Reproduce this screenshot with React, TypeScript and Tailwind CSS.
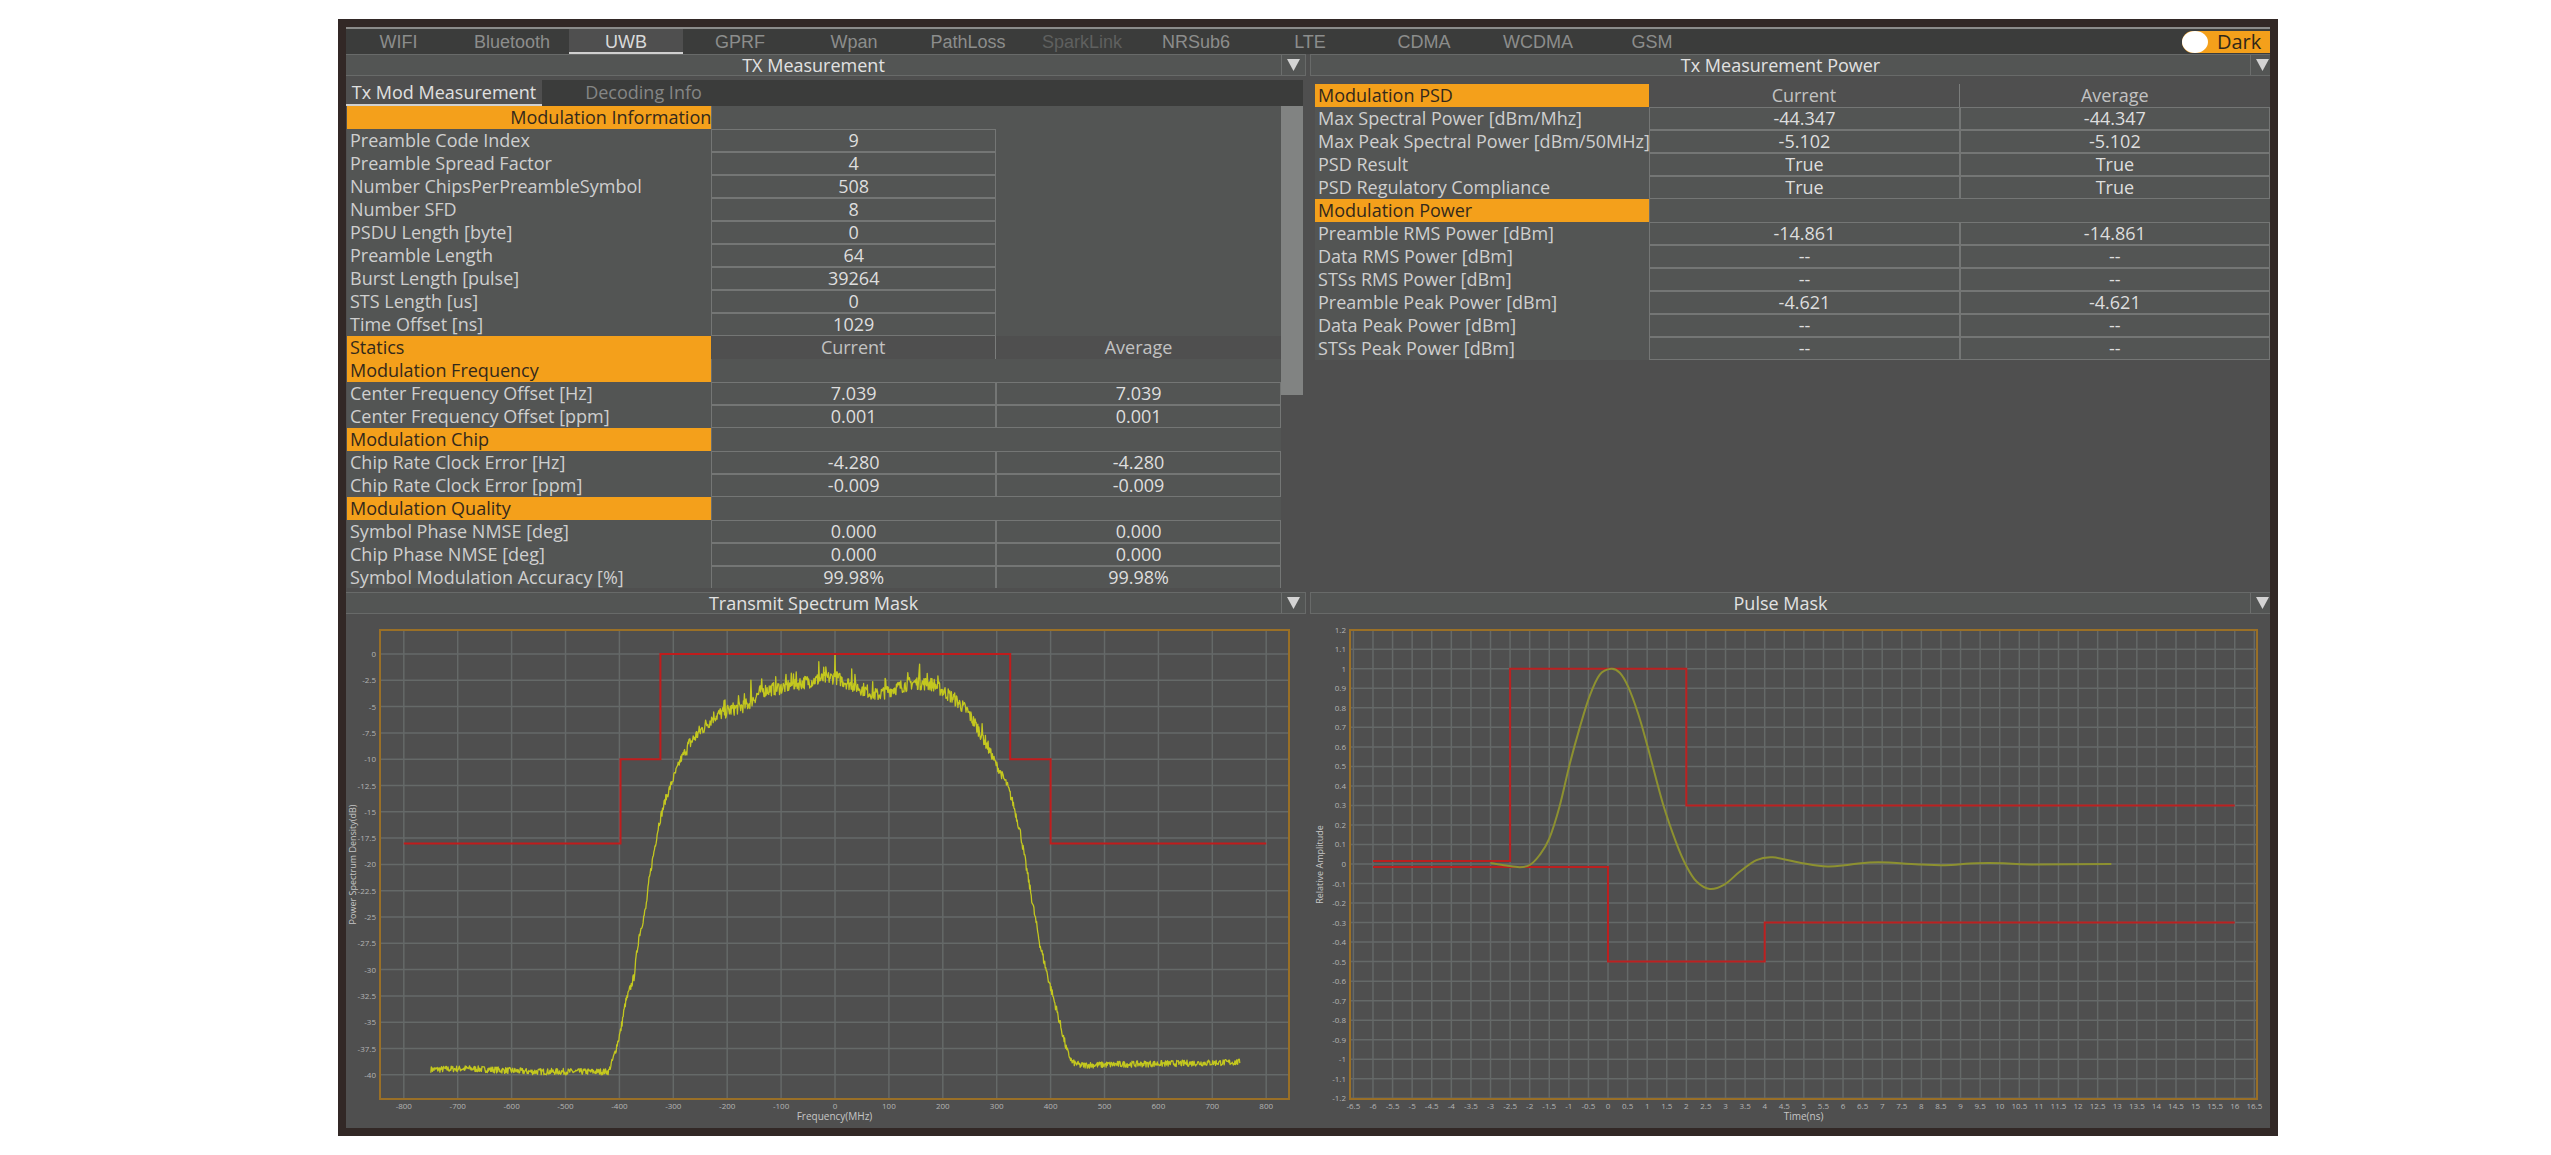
import { useState, type ReactNode } from 'react';
import clsx from 'clsx';

type Point = [number, number];
type Row = { kind: 'group' | 'info' | 'pair' | 'head'; label: string; values?: string[]; end?: boolean };

const TABS = ['WIFI', 'Bluetooth', 'UWB', 'GPRF', 'Wpan', 'PathLoss', 'SparkLink', 'NRSub6', 'LTE', 'CDMA', 'WCDMA', 'GSM'];
const SUB_TABS = ['Tx Mod Measurement', 'Decoding Info'];

const MODULATION_ROWS: Row[] = [
    { kind: 'group', label: 'Modulation Information', end: true },
    { kind: 'info', label: 'Preamble Code Index', values: ['9'] },
    { kind: 'info', label: 'Preamble Spread Factor', values: ['4'] },
    { kind: 'info', label: 'Number ChipsPerPreambleSymbol', values: ['508'] },
    { kind: 'info', label: 'Number SFD', values: ['8'] },
    { kind: 'info', label: 'PSDU Length [byte]', values: ['0'] },
    { kind: 'info', label: 'Preamble Length', values: ['64'] },
    { kind: 'info', label: 'Burst Length [pulse]', values: ['39264'] },
    { kind: 'info', label: 'STS Length [us]', values: ['0'] },
    { kind: 'info', label: 'Time Offset [ns]', values: ['1029'] },
    { kind: 'head', label: 'Statics', values: ['Current', 'Average'] },
    { kind: 'group', label: 'Modulation Frequency' },
    { kind: 'pair', label: 'Center Frequency Offset [Hz]', values: ['7.039', '7.039'] },
    { kind: 'pair', label: 'Center Frequency Offset [ppm]', values: ['0.001', '0.001'] },
    { kind: 'group', label: 'Modulation Chip' },
    { kind: 'pair', label: 'Chip Rate Clock Error [Hz]', values: ['-4.280', '-4.280'] },
    { kind: 'pair', label: 'Chip Rate Clock Error [ppm]', values: ['-0.009', '-0.009'] },
    { kind: 'group', label: 'Modulation Quality' },
    { kind: 'pair', label: 'Symbol Phase NMSE [deg]', values: ['0.000', '0.000'] },
    { kind: 'pair', label: 'Chip Phase NMSE [deg]', values: ['0.000', '0.000'] },
    { kind: 'pair', label: 'Symbol Modulation Accuracy [%]', values: ['99.98%', '99.98%'] },
];

const POWER_ROWS: Row[] = [
    { kind: 'head', label: 'Modulation PSD', values: ['Current', 'Average'] },
    { kind: 'pair', label: 'Max Spectral Power [dBm/Mhz]', values: ['-44.347', '-44.347'] },
    { kind: 'pair', label: 'Max Peak Spectral Power [dBm/50MHz]', values: ['-5.102', '-5.102'] },
    { kind: 'pair', label: 'PSD Result', values: ['True', 'True'] },
    { kind: 'pair', label: 'PSD Regulatory Compliance', values: ['True', 'True'] },
    { kind: 'group', label: 'Modulation Power' },
    { kind: 'pair', label: 'Preamble RMS Power [dBm]', values: ['-14.861', '-14.861'] },
    { kind: 'pair', label: 'Data RMS Power [dBm]', values: ['--', '--'] },
    { kind: 'pair', label: 'STSs RMS Power [dBm]', values: ['--', '--'] },
    { kind: 'pair', label: 'Preamble Peak Power [dBm]', values: ['-4.621', '-4.621'] },
    { kind: 'pair', label: 'Data Peak Power [dBm]', values: ['--', '--'] },
    { kind: 'pair', label: 'STSs Peak Power [dBm]', values: ['--', '--'] },
];

// [MHz, dB]
const SPECTRUM_MASK: Point[] = [
    [-800, -18], [-398, -18], [-398, -10], [-324, -10], [-324, 0], [325, 0], [325, -10], [400, -10], [400, -18], [800, -18],
];
const SPECTRUM: Point[] = [
    [-750, -39.5], [-680, -39.4], [-565, -39.7], [-420, -39.7], [-410, -38.2], [-398, -35.9], [-389, -33.2], [-373, -30.7],
    [-364, -26.9], [-351, -24.2], [-345, -21.6], [-339, -19.7], [-327, -16.2], [-315, -13.9], [-299, -11.7], [-286, -10],
    [-271, -8.6], [-255, -7.6], [-224, -5.9], [-199, -5.4], [-162, -4.8], [-137, -3.5], [-100, -3.2], [-69, -2.8],
    [-38, -2.5], [-14, -2.3], [0, -2.2], [35, -3], [78, -3.9], [109, -3.3], [146, -2.7], [183, -2.9], [220, -4.2],
    [245, -5.4], [276, -8], [300, -10.6], [319, -12.4], [331, -14.3], [344, -17], [356, -20.6], [368, -24.1],
    [381, -27.8], [399, -31.5], [412, -34], [430, -37.7], [440, -38.8], [455, -39.1], [529, -39], [653, -38.9], [751, -38.8],
];
const SPIKES: Record<string, number> = { '0': 2.2, '31': 1.5, '157': 1.8, '171': 1, '-30': 1.7, '-77': 1, '-156': 2, '93': 1.3 };

// [ns, relative amplitude]
const PULSE_UPPER: Point[] = [[-6, 0.015], [-2.5, 0.015], [-2.5, 1], [2, 1], [2, 0.3], [16, 0.3]];
const PULSE_LOWER: Point[] = [[-6, -0.015], [0, -0.015], [0, -0.5], [4, -0.5], [4, -0.3], [16, -0.3]];
const PULSE: Point[] = [
    [-3, 0.005], [-2.6, -0.008], [-2.25, -0.016], [-2, -0.005], [-1.75, 0.045], [-1.5, 0.13], [-1.23, 0.3], [-0.98, 0.51],
    [-0.72, 0.7], [-0.47, 0.86], [-0.21, 0.97], [0.08, 1], [0.3, 0.98], [0.51, 0.91], [0.77, 0.77], [1, 0.61], [1.4, 0.31],
    [1.74, 0.11], [2, -0.01], [2.26, -0.09], [2.6, -0.128], [2.98, -0.104], [3.36, -0.04], [3.79, 0.02], [4.2, 0.034],
    [4.9, 0.007], [5.6, -0.013], [6.2, -0.002], [6.9, 0.009], [8, -0.003], [8.6, -0.006], [9.4, 0.004], [10.1, 0.004],
    [10.8, -0.002], [12.85, 0],
];

const range = (from: number, to: number, step: number) =>
    Array.from({ length: Math.round((to - from) / step) + 1 }, (_, i) => Math.round((from + i * step) * 10) / 10);

// fills the gaps between the measured points and adds a repeatable noise
function noisySpectrum(): Point[] {
    const out: Point[] = [];
    let seed = 7;
    let segment = 0;
    for (let f = -750; f <= 751; f++) {
        while (f > SPECTRUM[segment + 1][0]) segment++;
        const [x0, y0] = SPECTRUM[segment];
        const [x1, y1] = SPECTRUM[segment + 1];
        const base = y0 + ((y1 - y0) * (f - x0)) / (x1 - x0);
        seed = (seed * 16807) % 2147483647;
        const r = seed / 2147483647;
        let amp = 0.3;
        if (base > -38) amp = 0.4;
        if (base > -9) amp = 0.65;
        let noise = (r - 0.5) * 2 * amp;
        if (base > -9 && r > 0.96) noise += 0.5;
        out.push([f, base + (SPIKES[String(f)] ?? noise)]);
    }
    return out;
}

const NOISY = noisySpectrum();

function smoothPath(points: Point[]) {
    let d = `M${points[0][0]} ${points[0][1]}`;
    for (let i = 0; i < points.length - 1; i++) {
        const p0 = points[Math.max(i - 1, 0)];
        const p1 = points[i];
        const p2 = points[i + 1];
        const p3 = points[Math.min(i + 2, points.length - 1)];
        d += `C${p1[0] + (p2[0] - p0[0]) / 6} ${p1[1] + (p2[1] - p0[1]) / 6} ${p2[0] - (p3[0] - p1[0]) / 6} ${p2[1] - (p3[1] - p1[1]) / 6} ${p2[0]} ${p2[1]}`;
    }
    return d;
}

const linePath = (points: Point[]) => 'M' + points.map((p) => `${p[0].toFixed(1)} ${p[1].toFixed(1)}`).join('L');

type ChartProps = {
    title: string;
    box: { left: number; right: number; top: number; bottom: number };
    xTicks: number[];
    yTicks: number[];
    x: (v: number) => number;
    y: (v: number) => number;
    xLabel: string;
    yLabel: string;
    yLabelX: number;
    children: ReactNode;
};

function Chart({ title, box, xTicks, yTicks, x, y, xLabel, yLabel, yLabelX, children }: ChartProps) {
    const midX = (box.left + box.right) / 2;
    const midY = (box.top + box.bottom) / 2;
    return (
        <svg viewBox="0 0 962 514" role="img" aria-label={title} className="block h-auto w-full bg-[#4f4f4f]">
            <g stroke="#656968" strokeWidth="1.5">
                {xTicks.map((t) => <line key={t} x1={x(t)} x2={x(t)} y1={box.top} y2={box.bottom} />)}
                {yTicks.map((t) => <line key={t} x1={box.left} x2={box.right} y1={y(t)} y2={y(t)} />)}
            </g>
            <rect x={box.left} y={box.top} width={box.right - box.left} height={box.bottom - box.top} fill="none" stroke="#9a7027" strokeWidth="2" />
            <g fill="#b4b4b4" fontSize="8">
                {xTicks.map((t) => <text key={t} x={x(t)} y={box.bottom + 10} textAnchor="middle">{t}</text>)}
                {yTicks.map((t) => <text key={t} x={box.left - 4} y={y(t) + 3} textAnchor="end">{t}</text>)}
            </g>
            <g fill="#c6c6c6">
                <text x={midX} y={box.bottom + 21} textAnchor="middle" fontSize="10">{xLabel}</text>
                <text transform={`translate(${yLabelX} ${midY}) rotate(-90)`} textAnchor="middle" fontSize="9">{yLabel}</text>
            </g>
            {children}
        </svg>
    );
}

function SpectrumChart() {
    const x = (f: number) => 489 + f * 0.539;
    const y = (db: number) => 40 - db * 10.52;
    const place = (points: Point[]) => linePath(points.map(([a, b]): Point => [x(a), y(b)]));
    return (
        <Chart title="Transmit Spectrum Mask" box={{ left: 34, right: 943, top: 16, bottom: 485 }} xTicks={range(-800, 800, 100)}
            yTicks={range(-40, 0, 2.5)} x={x} y={y} xLabel="Frequency(MHz)" yLabel="Power Spectrum Density(dB)" yLabelX={10}>
            <path d={place(NOISY)} fill="none" stroke="#c3c71f" strokeWidth="1.3" strokeLinejoin="round" />
            <path d={place(SPECTRUM_MASK)} fill="none" stroke="#c01c1c" strokeWidth="2" />
        </Chart>
    );
}

function PulseChart() {
    const x = (t: number) => 300 + t * 39.17;
    const y = (a: number) => 250 - a * 195.2;
    const place = (points: Point[]) => points.map(([a, b]): Point => [x(a), y(b)]);
    return (
        <Chart title="Pulse Mask" box={{ left: 42, right: 949, top: 16, bottom: 485 }} xTicks={range(-6.5, 16.5, 0.5)}
            yTicks={range(-1.2, 1.2, 0.1)} x={x} y={y} xLabel="Time(ns)" yLabel="Relative Amplitude" yLabelX={15}>
            <path d={linePath(place(PULSE_UPPER))} fill="none" stroke="#bb2020" strokeWidth="2" />
            <path d={linePath(place(PULSE_LOWER))} fill="none" stroke="#bb2020" strokeWidth="2" />
            <path d={smoothPath(place(PULSE))} fill="none" stroke="#8d9130" strokeWidth="2" />
        </Chart>
    );
}

function PanelHeader({ title, right }: { title: string; right?: boolean }) {
    return (
        <div className={clsx('flex border-y border-[#686a69] bg-[#535554] text-[#e2e2e2]', right ? 'ml-[2px] border-l' : 'mr-[2px] border-r')}>
            <h2 className="flex-1 text-center text-lg leading-5 font-medium">{title}</h2>
            <button type="button" aria-label={`${title} menu`}
                className={clsx('flex items-center justify-center border-l border-[#6c6e6d]', right ? 'w-5 pl-1' : 'w-6')}>
                <svg viewBox="0 0 13 12" className="h-3 w-[13px]" fill="#d4d4d4"><path d="M0 0h13L6.5 12z" /></svg>
            </button>
        </div>
    );
}

function MeasureTable({ rows, label, narrow }: { rows: Row[]; label: string; narrow?: boolean }) {
    return (
        <table aria-label={label} className="w-full table-fixed border-separate border-spacing-0 bg-[#535554] text-lg leading-[18px]">
            <colgroup>
                <col className={narrow ? 'w-[35%]' : 'w-[39%]'} />
                <col />
                <col />
            </colgroup>
            <tbody>
                {rows.map((row) => {
                    const orange = row.kind === 'group' || row.kind === 'head';
                    return (
                        <tr key={row.label} className="h-[23px]">
                            <th scope="row" className={clsx('h-[23px] p-0 pb-[2px] pl-[3px] font-normal whitespace-nowrap',
                                row.end ? 'text-right' : 'text-left', orange ? 'bg-[#f4a01b] text-[#33291b]' : 'text-[#cfcfcf]')}>
                                {row.label}
                            </th>
                            {row.kind === 'group' && <td colSpan={2} className="h-[23px] border-l border-[#6c6e6d] p-0" />}
                            {row.kind === 'head' && row.values!.map((v, i) => (
                                <td key={i} className={clsx('h-[23px] bg-[#4f4f4f] p-0 pb-[2px] text-center text-[#c2c2c2]', i === 0 && 'border-r border-[#7a7c7b]')}>{v}</td>
                            ))}
                            {(row.kind === 'info' || row.kind === 'pair') && row.values!.map((v, i) => (
                                <td key={i} className="h-[23px] border border-[#747675] p-0 pb-[2px] text-center text-[#dedede]">{v}</td>
                            ))}
                            {row.kind === 'info' && <td className="h-[23px] p-0" />}
                        </tr>
                    );
                })}
            </tbody>
        </table>
    );
}

export default function App() {
    const [tab, setTab] = useState('UWB');
    const [subTab, setSubTab] = useState(SUB_TABS[0]);
    const [dark, setDark] = useState(true);

    return (
        <main className="min-h-screen bg-white pt-[19px] pr-[10.7%] pl-[13.25%] font-['Open_Sans','Noto_Sans',sans-serif]">
            <div className="overflow-hidden border-8 border-[#322826] bg-[#4f4f4f]">
                <nav className="flex items-center border-t-2 border-[#8b8b8a] bg-[#3b3c3b] font-['Liberation_Sans',Arial,sans-serif]">
                    {TABS.map((name) => (
                        <button key={name} type="button" disabled={name === 'SparkLink'} onClick={() => setTab(name)}
                            className={clsx('h-[25px] w-[114px] border-b-2 pt-[2px] text-lg leading-5 first:w-[109px] first:pr-1',
                                tab === name ? 'border-[#d0d0d0] bg-[#4f4f4f] text-[#dadada]' : 'border-transparent text-[#8c8d8c] disabled:text-[#5f605f]')}>
                            {name}
                        </button>
                    ))}
                    <label className="ml-auto flex h-[22px] w-[88px] items-center rounded-l-full rounded-r-md bg-[#f4a01b] font-['Open_Sans','Noto_Sans',sans-serif] text-xl leading-5 text-[#2f2718]">
                        <input type="checkbox" role="switch" checked={dark} onChange={(e) => setDark(e.target.checked)}
                            className="h-[22px] w-[26px] appearance-none rounded-[50%] bg-white" />
                        <span className="flex-1 text-center">Dark</span>
                    </label>
                </nav>
                <div className="grid grid-cols-2">
                    <section>
                        <PanelHeader title="TX Measurement" />
                        <div className="mt-1 mr-[5px]">
                            <div className="flex bg-[#3b3c3b]">
                                {SUB_TABS.map((name) => (
                                    <button key={name} type="button" onClick={() => setSubTab(name)}
                                        className={clsx('h-[26px] border-b-2 text-lg leading-5 first:w-[196px] last:w-[203px]',
                                            subTab === name ? 'border-[#d0d0d0] bg-[#4f4f4f] text-[#e0e0e0]' : 'border-transparent text-[#858685]')}>
                                        {name}
                                    </button>
                                ))}
                            </div>
                            <div className="flex h-[482px] overflow-hidden">
                                <div className="flex-1 pl-px">
                                    <MeasureTable rows={MODULATION_ROWS} label="Modulation results" />
                                </div>
                                <div className="w-[22px]">
                                    <div className="h-[289px] bg-[#818382]" />
                                </div>
                            </div>
                        </div>
                    </section>
                    <section>
                        <PanelHeader title="Tx Measurement Power" right />
                        <div className="mt-2 ml-[7px]">
                            <MeasureTable rows={POWER_ROWS} label="Power results" narrow />
                        </div>
                    </section>
                    <section className="mt-1">
                        <PanelHeader title="Transmit Spectrum Mask" />
                        <SpectrumChart />
                    </section>
                    <section className="mt-1">
                        <PanelHeader title="Pulse Mask" right />
                        <PulseChart />
                    </section>
                </div>
            </div>
        </main>
    );
}
